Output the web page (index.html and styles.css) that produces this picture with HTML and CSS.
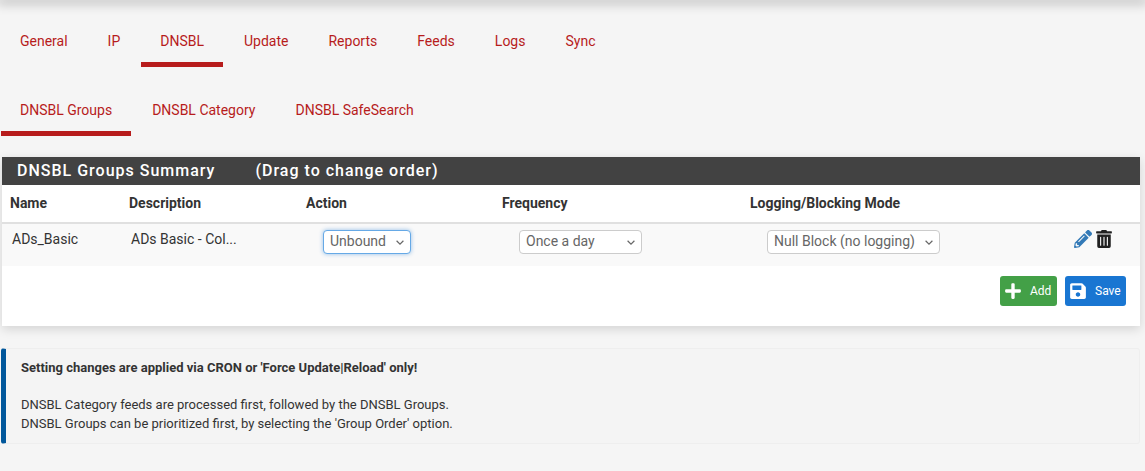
FILE: index.html
```html
<!DOCTYPE html>
<html lang="en">
<head>
<meta charset="utf-8">
<title>DNSBL Groups</title>
<link rel="stylesheet" href="styles.css">
</head>
<body>
<div class="topbar"></div>
<nav class="tabs tabs-main">
  <a class="tab">General</a>
  <a class="tab">IP</a>
  <a class="tab active">DNSBL</a>
  <a class="tab">Update</a>
  <a class="tab">Reports</a>
  <a class="tab">Feeds</a>
  <a class="tab">Logs</a>
  <a class="tab">Sync</a>
</nav>
<nav class="tabs tabs-sub">
  <a class="tab active">DNSBL Groups</a>
  <a class="tab">DNSBL Category</a>
  <a class="tab">DNSBL SafeSearch</a>
</nav>
<section class="panel">
  <h2 class="panel-title"><span class="title-main">DNSBL Groups Summary</span><span>(Drag to change order)</span></h2>
  <table class="groups">
    <thead>
      <tr>
        <th class="c-name">Name</th>
        <th class="c-desc">Description</th>
        <th class="c-action">Action</th>
        <th class="c-freq">Frequency</th>
        <th class="c-mode">Logging/Blocking Mode</th>
        <th class="c-icons"></th>
      </tr>
    </thead>
    <tbody>
      <tr>
        <td>ADs_Basic</td>
        <td>ADs Basic - Col...</td>
        <td class="has-select"><select class="sel sel-action focused"><option>Unbound</option></select></td>
        <td class="has-select"><select class="sel sel-freq"><option>Once a day</option></select></td>
        <td class="has-select"><select class="sel sel-mode"><option>Null Block (no logging)</option></select></td>
        <td class="icons">
          <svg class="ico ico-edit" viewBox="0 0 512 512"><path d="M497.9 142.1l-46.1 46.1c-4.7 4.7-12.3 4.7-17 0l-111-111c-4.7-4.7-4.7-12.3 0-17l46.1-46.1c18.7-18.7 49.1-18.7 67.9 0l60.1 60.1c18.8 18.7 18.8 49.1 0 67.9zM284.2 99.8L21.6 362.4.4 483.9c-2.9 16.4 11.4 30.6 27.8 27.8l121.5-21.3 262.6-262.6c4.7-4.7 4.7-12.3 0-17l-111-111c-4.8-4.7-12.4-4.7-17.1 0zM124.1 339.9c-5.5-5.5-5.5-14.3 0-19.8l154-154c5.5-5.5 14.3-5.5 19.8 0s5.5 14.3 0 19.8l-154 154c-5.5 5.5-14.3 5.5-19.8 0zM88 424h48v36.3l-64.5 11.3-31.1-31.1L51.7 376H88v48z"/></svg>
          <svg class="ico ico-trash" viewBox="0 0 448 512"><path d="M32 464a48 48 0 0 0 48 48h288a48 48 0 0 0 48-48V128H32zm272-256a16 16 0 0 1 32 0v224a16 16 0 0 1-32 0zm-96 0a16 16 0 0 1 32 0v224a16 16 0 0 1-32 0zm-96 0a16 16 0 0 1 32 0v224a16 16 0 0 1-32 0zM432 32H312l-9.4-18.7A24 24 0 0 0 281.1 0H166.8a23.72 23.72 0 0 0-21.4 13.3L136 32H16A16 16 0 0 0 0 48v32a16 16 0 0 0 16 16h416a16 16 0 0 0 16-16V48a16 16 0 0 0-16-16z"/></svg>
        </td>
      </tr>
    </tbody>
  </table>
  <div class="actions">
    <button class="btn btn-add">
      <svg class="btn-ico" viewBox="0 0 448 512"><path d="M416 208H272V64c0-17.67-14.33-32-32-32h-32c-17.67 0-32 14.33-32 32v144H32c-17.67 0-32 14.33-32 32v32c0 17.67 14.33 32 32 32h144v144c0 17.67 14.33 32 32 32h32c17.67 0 32-14.33 32-32V304h144c17.67 0 32-14.33 32-32v-32c0-17.67-14.33-32-32-32z"/></svg>
      Add
    </button>
    <button class="btn btn-save">
      <svg class="btn-ico" viewBox="0 0 448 512"><path d="M433.941 129.941l-83.882-83.882A48 48 0 0 0 316.118 32H48C21.49 32 0 53.49 0 80v352c0 26.51 21.49 48 48 48h352c26.51 0 48-21.49 48-48V163.882a48 48 0 0 0-14.059-33.941zM224 416c-35.346 0-64-28.654-64-64 0-35.346 28.654-64 64-64s64 28.654 64 64c0 35.346-28.654 64-64 64zm96-304.52V212c0 6.627-5.373 12-12 12H76c-6.627 0-12-5.373-12-12V108c0-6.627 5.373-12 12-12h228.52c3.183 0 6.235 1.264 8.485 3.515l3.48 3.48A11.996 11.996 0 0 1 320 111.48z"/></svg>
      Save
    </button>
  </div>
</section>
<aside class="note">
  <p class="note-head">Setting changes are applied via CRON or 'Force Update|Reload' only!</p>
  <p class="note-body">DNSBL Category feeds are processed first, followed by the DNSBL Groups.<br>DNSBL Groups can be prioritized first, by selecting the 'Group Order' option.</p>
</aside>
</body>
</html>
```
FILE: styles.css
```css
* { box-sizing: border-box; }
html, body { margin: 0; height: 100%; }
body {
  background: #f5f5f5;
  font-family: Roboto, "Liberation Sans", sans-serif;
  font-size: 14px;
  color: #333;
  overflow: hidden;
}
.topbar {
  height: 0;
  box-shadow: 0 0 12px 3px rgba(0, 0, 0, .3);
}
.tabs {
  display: flex;
  color: #b71c1c;
}
.tabs-main { padding-top: 20px; }
.tabs-sub { padding-top: 22px; }
.tab {
  display: block;
  height: 47px;
  margin: 0 1px;
  padding: 12px 19px 0;
  line-height: 18px;
  border-bottom: 5px solid transparent;
}
.tab.active { border-bottom-color: #b71c1c; }
.panel {
  margin: 21px 5px 0 2px;
  height: 169px;
  background: #fff;
  box-shadow: 0 3px 10px rgba(0, 0, 0, .14);
}
.panel-title {
  margin: 0;
  height: 28px;
  padding: 0 15px 2px;
  display: flex;
  align-items: center;
  background: #424242;
  color: #fff;
  font-size: 16px;
  font-weight: 500;
  letter-spacing: 1px;
}
.title-main { margin-right: 40px; }
.groups {
  width: 100%;
  table-layout: fixed;
  border-collapse: collapse;
}
.groups th {
  height: 38px;
  padding: 0 8px 1px;
  text-align: left;
  font-weight: 700;
  vertical-align: middle;
  border-bottom: 2px solid #e0e0e0;
}
.c-name { width: 119px; }
.c-desc { width: 177px; }
.c-action { width: 196px; }
.c-freq { width: 248px; }
.c-mode { width: 322px; }
.groups td {
  height: 43px;
  padding: 6px 10px 0;
  vertical-align: top;
  background: #f9f9f9;
  line-height: 18px;
}
.groups td.has-select { padding: 6px 0 0 25px; }
.sel {
  display: block;
  height: 24px;
  padding: 0 18px 2px 6px;
  font: 14px Roboto, "Liberation Sans", sans-serif;
  color: #666;
  appearance: none;
  -webkit-appearance: none;
  background: #fff url("data:image/svg+xml;utf8,<svg xmlns='http://www.w3.org/2000/svg' width='8' height='5' viewBox='0 0 8 5'><path d='M.6.8L4 4.1 7.4.8' fill='none' stroke='%23666' stroke-width='1.2'/></svg>") no-repeat right 6px center;
  border: 1px solid #ccc;
  border-radius: 4px;
}
.sel-action { width: 88px; }
.sel-freq { width: 123px; }
.sel-mode { width: 173px; }
.sel.focused {
  border-color: #66a9e6;
  box-shadow: 0 0 4px rgba(25, 118, 210, .45);
}
.groups td.icons {
  padding: 6px 0 0 10px;
  white-space: nowrap;
}
.ico { display: inline-block; height: 18px; vertical-align: top; }
.ico-edit { width: 18px; fill: #337ab7; }
.ico-trash { width: 16px; margin-left: 1px; fill: #212121; }
.actions {
  display: flex;
  justify-content: flex-end;
  gap: 8px;
  padding: 10px 14px 0 0;
}
.btn {
  display: flex;
  align-items: center;
  height: 30px;
  border: 0;
  border-radius: 3px;
  color: #fff;
  font: 12px Roboto, "Liberation Sans", sans-serif;
}
.btn-add { width: 57px; background: #43a047; padding: 0 0 0 5px; gap: 9px; }
.btn-save { width: 61px; background: #1976d2; padding: 0 0 0 5px; gap: 9px; }
.btn-ico { width: 16px; height: 18px; fill: #fff; }
.note {
  margin: 22px 5px 0 1px;
  height: 96px;
  padding: 9px 15px;
  background: #f4f4f4;
  border: 1px solid #eee;
  border-left: 5px solid #01579b;
  border-radius: 3px;
  font-size: 13px;
  line-height: 19px;
  color: #333;
}
.note p { margin: 0; }
.note .note-head { font-weight: 700; margin-bottom: 18px; }
```
